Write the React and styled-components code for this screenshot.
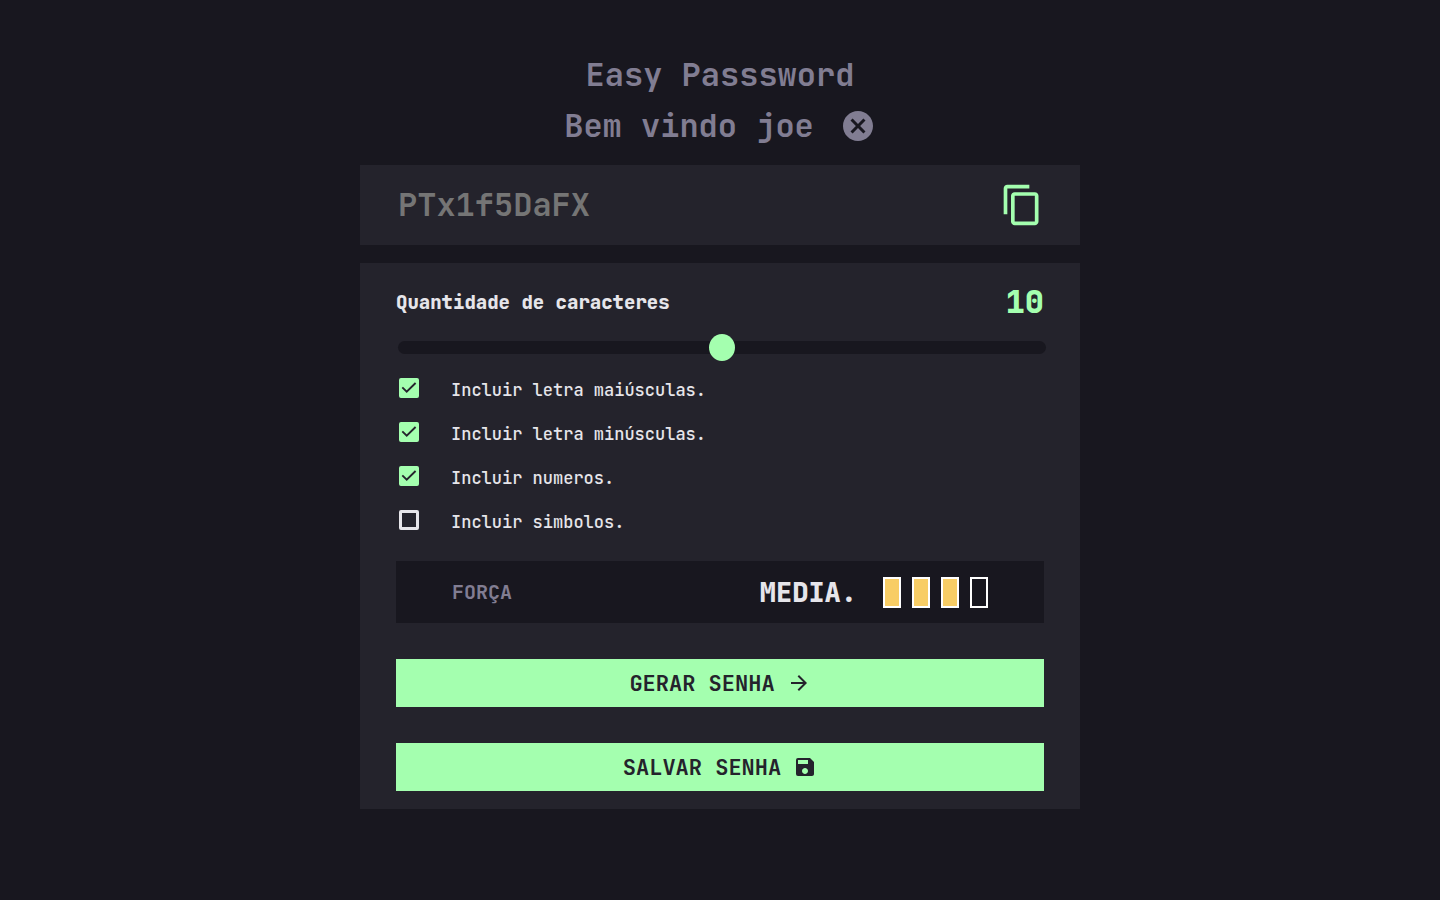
import React, { useState } from "react";
import styled, { createGlobalStyle } from "styled-components";
import { MdArrowForward, MdCancel, MdContentCopy, MdSave } from "react-icons/md";

const GlobalStyle = createGlobalStyle`
  * { box-sizing: border-box; margin: 0; }
  body {
    background: #18171f;
    color: #e6e5ea;
    font-family: "JetBrains Mono", "DejaVu Sans Mono", "Liberation Mono", monospace;
  }
  button, input { font: inherit; color: inherit; }
`;

const Page = styled.main`
  width: 50%;
  min-width: 560px;
  margin: 0 auto;
  padding: 49px 0 36px;
`;

const Header = styled.header`
  margin-bottom: 14px;
  color: #817d92;
`;

const Title = styled.h1`
  font-size: 32px;
  font-weight: 700;
  line-height: 51px;
  text-align: center;
`;

const Welcome = styled.div`
  display: flex;
  align-items: center;
  justify-content: center;
  gap: 26px;
`;

const IconButton = styled.button`
  display: flex;
  padding: 0;
  border: 0;
  background: none;
  color: ${(p) => p.$color};
  cursor: pointer;
`;

const PasswordBox = styled.section`
  display: flex;
  align-items: center;
  height: 80px;
  padding: 0 36px;
  background: #24232c;
`;

const PasswordInput = styled.input`
  flex: 1;
  min-width: 0;
  padding: 0 2px;
  border: 0;
  outline: 0;
  background: none;
  font-size: 32px;
  font-weight: 700;
  line-height: 48px;
  &::placeholder { color: #757575; }
`;

const Panel = styled.form`
  margin-top: 18px;
  padding: 18px 36px;
  background: #24232c;
`;

const LengthRow = styled.div`
  display: flex;
  align-items: center;
  justify-content: space-between;
  height: 42px;
`;

const LengthLabel = styled.label`
  font-size: 19px;
  font-weight: 800;
`;

const LengthValue = styled.output`
  color: #a4ffaf;
  font-size: 32px;
  font-weight: 800;
  line-height: 42px;
`;

const Slider = styled.input`
  display: block;
  appearance: none;
  width: 100%;
  height: 13px;
  margin: 18px 2px 12px;
  border-radius: 7px;
  background: #18171f;
  &::-webkit-slider-thumb {
    appearance: none;
    width: 26px;
    height: 27px;
    border-radius: 50%;
    background: #a4ffaf;
  }
`;

const Options = styled.ul`
  padding: 0;
  list-style: none;
`;

const Option = styled.li`
  display: flex;
  align-items: center;
  height: 44px;
  padding-left: 3px;
  gap: 32px;
`;

const OptionLabel = styled.label`
  padding-top: 3px;
  font-size: 17px;
  font-weight: 500;
`;

const Tick = styled.span`
  display: grid;
  width: 20px;
  height: 20px;
  > * { grid-area: 1 / 1; }
  svg { pointer-events: none; }
`;

const TickInput = styled.input`
  appearance: none;
  width: 20px;
  height: 20px;
  margin: 0;
  border: 3px solid #e6e5ea;
  border-radius: 2px;
  &:checked {
    border-color: #a4ffaf;
    background: #a4ffaf;
  }
`;

const Strength = styled.div`
  display: flex;
  align-items: center;
  height: 62px;
  margin-top: 19px;
  padding: 0 56px;
  background: #18171f;
`;

const StrengthLabel = styled.span`
  margin-right: auto;
  color: #817d92;
  font-size: 20px;
  font-weight: 700;
`;

const StrengthLevel = styled.strong`
  margin-right: 26px;
  font-size: 27px;
  font-weight: 800;
`;

const Bars = styled.div`
  display: flex;
  gap: 11px;
`;

const Bar = styled.span`
  width: 18px;
  height: 31px;
  border: 2px solid #ffffff;
  background: ${(p) => (p.$on ? "#f8cd65" : "transparent")};
`;

const ActionButton = styled.button`
  display: flex;
  align-items: center;
  justify-content: center;
  gap: 12px;
  width: 100%;
  height: 48px;
  margin-top: 36px;
  border: 0;
  background: #a4ffaf;
  color: #24232c;
  font-size: 22px;
  font-weight: 700;
  cursor: pointer;
`;

const OPTIONS = [
  { id: "upper", label: "Incluir letra maiúsculas.", checked: true },
  { id: "lower", label: "Incluir letra minúsculas.", checked: true },
  { id: "numbers", label: "Incluir numeros.", checked: true },
  { id: "symbols", label: "Incluir simbolos.", checked: false },
];

function OptionRow({ id, label, checked: initial }) {
  const [checked, setChecked] = useState(initial);
  return (
    <Option>
      <Tick>
        <TickInput
          type="checkbox"
          id={id}
          checked={checked}
          onChange={(e) => setChecked(e.target.checked)}
        />
        {checked && (
          <svg width="20" height="20" viewBox="0 0 20 20" aria-hidden="true">
            <path d="M3.3 9.4L7.7 13.6L16.6 5" fill="none" stroke="#24232c" strokeWidth="1.9" />
          </svg>
        )}
      </Tick>
      <OptionLabel htmlFor={id}>{label}</OptionLabel>
    </Option>
  );
}

export default function App() {
  const [length, setLength] = useState(10);
  return (
    <>
      <GlobalStyle />
      <Page>
        <Header>
          <Title>Easy Passsword</Title>
          <Welcome>
            <Title as="h2">Bem vindo joe</Title>
            <IconButton type="button" aria-label="Sair" $color="#817d92">
              <MdCancel size={36} />
            </IconButton>
          </Welcome>
        </Header>
        <PasswordBox>
          <PasswordInput type="text" aria-label="Senha" placeholder="PTx1f5DaFX" />
          <IconButton type="button" aria-label="Copiar" $color="#a4ffaf">
            <MdContentCopy size={44} />
          </IconButton>
        </PasswordBox>
        <Panel onSubmit={(e) => e.preventDefault()}>
          <LengthRow>
            <LengthLabel htmlFor="length">Quantidade de caracteres</LengthLabel>
            <LengthValue htmlFor="length">{length}</LengthValue>
          </LengthRow>
          <Slider
            type="range"
            id="length"
            min="0"
            max="20"
            value={length}
            onChange={(e) => setLength(Number(e.target.value))}
          />
          <Options>
            {OPTIONS.map((option) => (
              <OptionRow key={option.id} {...option} />
            ))}
          </Options>
          <Strength>
            <StrengthLabel>FORÇA</StrengthLabel>
            <StrengthLevel>MEDIA.</StrengthLevel>
            <Bars>
              <Bar $on />
              <Bar $on />
              <Bar $on />
              <Bar />
            </Bars>
          </Strength>
          <ActionButton type="submit">
            GERAR SENHA
            <MdArrowForward size={24} />
          </ActionButton>
          <ActionButton type="button">
            SALVAR SENHA
            <MdSave size={24} />
          </ActionButton>
        </Panel>
      </Page>
    </>
  );
}
